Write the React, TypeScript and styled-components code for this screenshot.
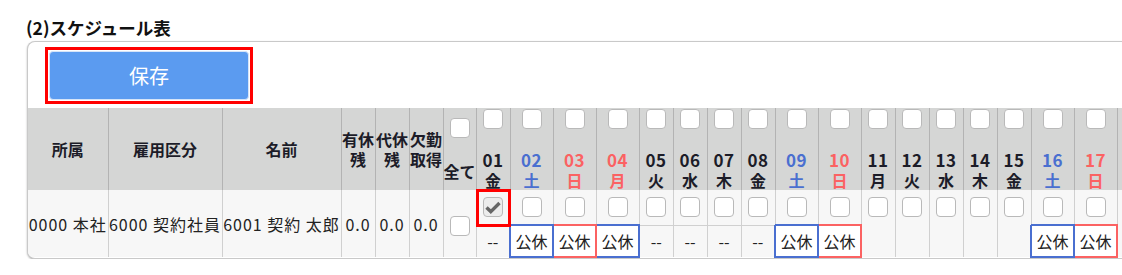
import React from 'react';
import styled, { createGlobalStyle } from 'styled-components';

const GlobalStyle = createGlobalStyle`
  html, body {
    margin: 0;
    padding: 0;
    background: #fff;
    overflow: hidden;
  }
  body {
    font-family: "Noto Sans CJK JP", "Noto Sans", sans-serif;
    color: #222;
  }
`;

const BLUE = '#4a6fd0';
const RED = '#fb6262';
const WEEK = ['日', '月', '火', '水', '木', '金', '土'];

type Day = {
  num: string;
  week: string;
  color: string;
  width: number;
  bottom: '' | '--' | '公休';
  boxColor: string;
};

// 2025年8月 (1日は金曜)
const days: Day[] = Array.from({ length: 31 }, (_, i) => {
  const d = i + 1;
  const w = (5 + i) % 7;
  const holiday = d === 4;
  const color = w === 6 ? BLUE : w === 0 || holiday ? RED : '#1c1c28';
  let bottom: Day['bottom'] = '';
  if (w === 0 || w === 6 || holiday) bottom = '公休';
  else if (d <= 8) bottom = '--';
  return {
    num: String(d).padStart(2, '0'),
    week: WEEK[w],
    color,
    width: bottom === '公休' ? 43 : 34,
    bottom,
    boxColor: w === 0 ? RED : BLUE,
  };
});

const Page = styled.div`
  padding: 16px 0 0 27px;
`;

const Title = styled.h2`
  margin: 0 0 1px -1px;
  font-size: 17.5px;
  line-height: 24px;
  font-weight: bold;
  color: #111;
`;

const Panel = styled.div`
  width: max-content;
  border: 1px solid #c9c9c9;
  border-right: none;
  border-radius: 8px 0 0 8px;
  box-shadow: 0 1px 2px rgba(0, 0, 0, 0.3);
  overflow: hidden;
  background: #fff;
`;

const Toolbar = styled.div`
  padding: 5px 0 4px 17px;
`;

const Highlight = styled.div`
  display: inline-block;
  border: 3px solid #f00;
  padding: 1px;
`;

const SaveButton = styled.button`
  display: block;
  width: 200px;
  height: 49px;
  background: #5b9bf0;
  color: #fff;
  border: 1px solid #d6e4f8;
  border-radius: 4px;
  font-family: inherit;
  font-size: 20px;
  cursor: pointer;
`;

const Table = styled.table`
  border-collapse: collapse;
  table-layout: fixed;
  font-size: 16px;
`;

const Col = styled.col<{ $w: number }>`
  width: ${(p) => p.$w}px;
`;

const HeadCell = styled.th<{ $color?: string }>`
  height: 82px;
  padding: 0;
  background: #d5d6d5;
  border-right: 1px solid #b3b3b3;
  color: ${(p) => p.$color ?? '#1c1c28'};
  font-weight: bold;
  line-height: 20px;
  text-align: center;
  vertical-align: middle;
  white-space: nowrap;
`;

const HeadStack = styled.div`
  display: flex;
  flex-direction: column;
  align-items: center;
`;

const DayNum = styled.span`
  font-size: 17px;
  letter-spacing: 0.5px;
`;

const Box = styled.span<{ $checked?: boolean; $top?: number; $bottom?: number }>`
  display: flex;
  align-items: center;
  justify-content: center;
  box-sizing: border-box;
  width: 20px;
  height: 20px;
  margin: ${(p) => p.$top ?? 0}px auto ${(p) => p.$bottom ?? 0}px;
  border: 1px solid #b9b9b9;
  border-radius: 4px;
  background: ${(p) => (p.$checked ? '#ececec' : '#fff')};
`;

const BodyCell = styled.td`
  padding: 0;
  background: #f7f7f7;
  border-right: 1px solid #d0d0d0;
  text-align: center;
  vertical-align: middle;
  white-space: nowrap;
`;

const InfoCell = styled(BodyCell)`
  letter-spacing: 1px;
`;

const CheckCell = styled(BodyCell)<{ $marked?: boolean }>`
  height: 35px;
  vertical-align: top;
  padding-top: 7px;
  box-sizing: border-box;
  position: relative;

  &::after {
    content: '';
    display: ${(p) => (p.$marked ? 'block' : 'none')};
    position: absolute;
    inset: -1px -1px -2px -1px;
    border: 3px solid #f00;
    z-index: 1;
  }
`;

const StatusCell = styled(BodyCell)<{ $kind: Day['bottom']; $color: string }>`
  height: 32px;
  box-sizing: border-box;
  line-height: 20px;
  border-top: ${(p) => (p.$kind === '--' ? '1px solid #d0d0d0' : 'none')};
  ${(p) =>
    p.$kind === '公休' &&
    `border: 2px solid ${p.$color}; background: #fff;`}
`;

const Check = () => (
  <svg width="16" height="13" viewBox="0 0 16 13">
    <path d="M1.5 6.5 L5.8 10.6 L14.5 2" fill="none" stroke="#666" strokeWidth="3.4" />
  </svg>
);

export default function App() {
  return (
    <>
      <GlobalStyle />
      <Page>
        <Title>(2)スケジュール表</Title>
        <Panel>
          <Toolbar>
            <Highlight>
              <SaveButton type="button">保存</SaveButton>
            </Highlight>
          </Toolbar>
          <Table>
            <colgroup>
              <Col $w={80} />
              <Col $w={114} />
              <Col $w={119} />
              <Col $w={34} />
              <Col $w={34} />
              <Col $w={34} />
              <Col $w={31} />
              {days.map((d) => (
                <Col key={d.num} $w={d.width} />
              ))}
            </colgroup>
            <thead>
              <tr>
                <HeadCell>所属</HeadCell>
                <HeadCell>雇用区分</HeadCell>
                <HeadCell>名前</HeadCell>
                <HeadCell>
                  有休
                  <br />残
                </HeadCell>
                <HeadCell>
                  代休
                  <br />残
                </HeadCell>
                <HeadCell>
                  欠勤
                  <br />
                  取得
                </HeadCell>
                <HeadCell>
                  <HeadStack>
                    <Box $bottom={23} />
                    <span>全て</span>
                  </HeadStack>
                </HeadCell>
                {days.map((d) => (
                  <HeadCell key={d.num} $color={d.color}>
                    <HeadStack>
                      <Box $top={1} $bottom={21} />
                      <DayNum>{d.num}</DayNum>
                      <span>{d.week}</span>
                    </HeadStack>
                  </HeadCell>
                ))}
              </tr>
            </thead>
            <tbody>
              <tr>
                <InfoCell rowSpan={2}>0000 本社</InfoCell>
                <InfoCell rowSpan={2}>6000 契約社員</InfoCell>
                <InfoCell rowSpan={2}>6001 契約 太郎</InfoCell>
                <InfoCell rowSpan={2}>0.0</InfoCell>
                <InfoCell rowSpan={2}>0.0</InfoCell>
                <InfoCell rowSpan={2}>0.0</InfoCell>
                <BodyCell rowSpan={2}>
                  <Box $top={5} />
                </BodyCell>
                {days.map((d, i) => (
                  <CheckCell key={d.num} $marked={i === 0}>
                    <Box $checked={i === 0}>{i === 0 && <Check />}</Box>
                  </CheckCell>
                ))}
              </tr>
              <tr>
                {days.map((d) => (
                  <StatusCell key={d.num} $kind={d.bottom} $color={d.boxColor}>
                    {d.bottom}
                  </StatusCell>
                ))}
              </tr>
            </tbody>
          </Table>
        </Panel>
      </Page>
    </>
  );
}
